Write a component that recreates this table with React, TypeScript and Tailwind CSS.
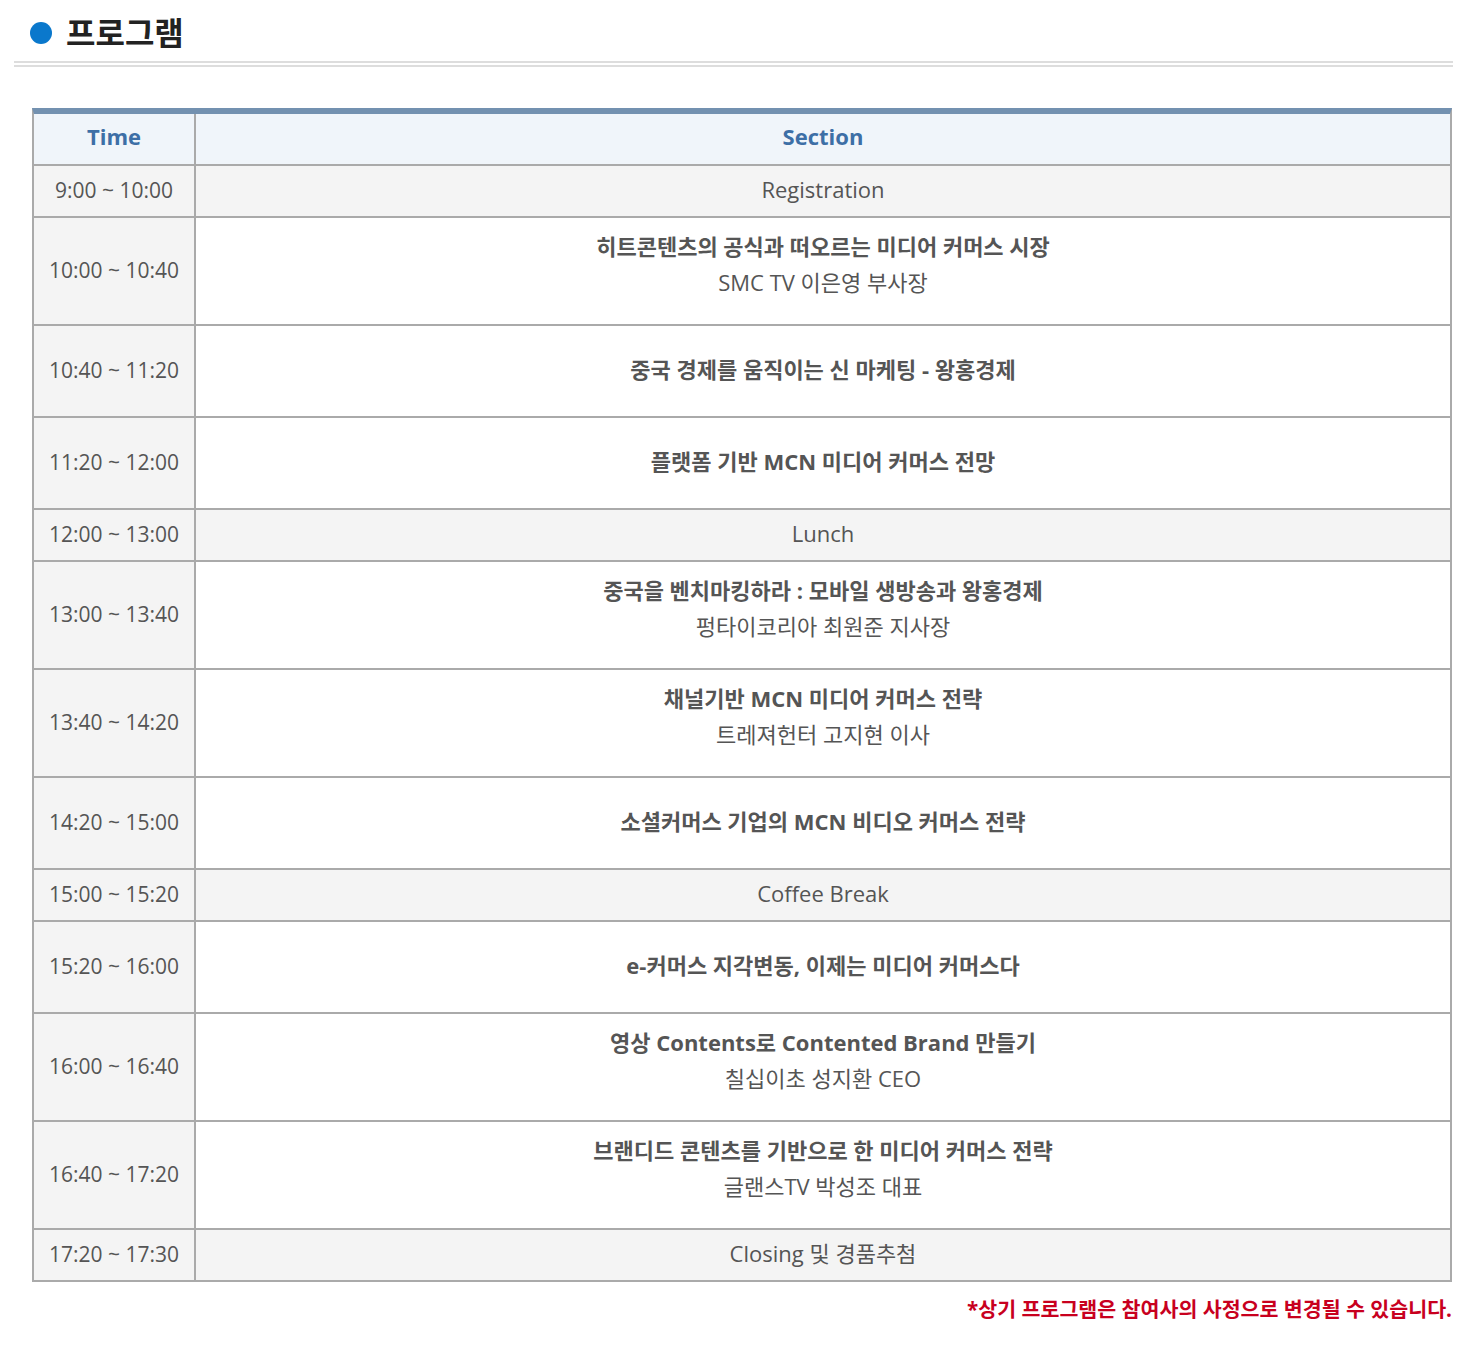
const font = "font-['Open_Sans','Noto_Sans_CJK_KR',sans-serif]";

type Row = {
  time: string;
  title: string;
  sub?: string;
  bold?: boolean;
  gray?: boolean;
};

const rows: Row[] = [
  { time: "9:00 ~ 10:00", title: "Registration", gray: true },
  { time: "10:00 ~ 10:40", title: "히트콘텐츠의 공식과 떠오르는 미디어 커머스 시장", sub: "SMC TV 이은영 부사장", bold: true },
  { time: "10:40 ~ 11:20", title: "중국 경제를 움직이는 신 마케팅 - 왕홍경제", bold: true },
  { time: "11:20 ~ 12:00", title: "플랫폼 기반 MCN 미디어 커머스 전망", bold: true },
  { time: "12:00 ~ 13:00", title: "Lunch", gray: true },
  { time: "13:00 ~ 13:40", title: "중국을 벤치마킹하라 : 모바일 생방송과 왕홍경제", sub: "펑타이코리아 최원준 지사장", bold: true },
  { time: "13:40 ~ 14:20", title: "채널기반 MCN 미디어 커머스 전략", sub: "트레져헌터 고지현 이사", bold: true },
  { time: "14:20 ~ 15:00", title: "소셜커머스 기업의 MCN 비디오 커머스 전략", bold: true },
  { time: "15:00 ~ 15:20", title: "Coffee Break", gray: true },
  { time: "15:20 ~ 16:00", title: "e-커머스 지각변동, 이제는 미디어 커머스다", bold: true },
  { time: "16:00 ~ 16:40", title: "영상 Contents로 Contented Brand 만들기", sub: "칠십이초 성지환 CEO", bold: true },
  { time: "16:40 ~ 17:20", title: "브랜디드 콘텐츠를 기반으로 한 미디어 커머스 전략", sub: "글랜스TV 박성조 대표", bold: true },
  { time: "17:20 ~ 17:30", title: "Closing 및 경품추첨", gray: true },
];

function ProgramRow({ row, last }: { row: Row; last: boolean }) {
  // heights include the 2px bottom border (border-box)
  let height = row.gray ? "h-[52px]" : row.sub ? "h-[108px]" : "h-[92px]";
  if (last) height = "h-[50px]";
  return (
    <div className={`flex ${height} ${last ? "" : "border-b-2 border-[#aaaaaa]"}`}>
      <div className="w-[162px] shrink-0 flex items-center justify-center bg-[#f4f4f4] border-r-2 border-[#aaaaaa] text-[21px] text-[#555555]">
        {row.time}
      </div>
      <div
        className={`flex-1 flex flex-col items-center justify-center gap-[8px] text-[#555555] ${
          row.gray ? "bg-[#f4f4f4]" : "bg-white"
        } ${row.sub ? "pb-[14px]" : "pb-[5px]"}`}
      >
        <div className={`text-[22px] leading-[28px] ${row.bold ? "font-bold" : ""}`}>{row.title}</div>
        {row.sub && <div className="text-[22px] leading-[28px]">{row.sub}</div>}
      </div>
    </div>
  );
}

export default function App() {
  return (
    <div className={`${font} bg-white w-[1480px] min-h-[1356px] pt-[12px]`}>
      <div className="pl-[30px] flex items-center gap-[14px] h-[42px]">
        <div className="w-[22px] h-[22px] rounded-full bg-[#0a78cc]" />
        <h2 className="text-[32px] font-bold text-[#222222] leading-none">프로그램</h2>
      </div>
      <div className="ml-[14px] w-[1439px] mt-[7px] border-t-2 border-b-2 border-[#dddddd] h-[6px]" />

      <div className="ml-[32px] w-[1420px] mt-[41px] border-t-[6px] border-t-[#7391b0] border-x-2 border-b-2 border-[#aaaaaa]">
        <div className="flex h-[52px] border-b-2 border-[#aaaaaa] bg-[#f0f5fa] text-[22px] font-bold text-[#3d6fa6]">
          <div className="w-[162px] shrink-0 flex items-center justify-center border-r-2 border-[#aaaaaa] pb-[5px]">Time</div>
          <div className="flex-1 flex items-center justify-center pb-[5px]">Section</div>
        </div>
        {rows.map((r, i) => (
          <ProgramRow key={r.time} row={r} last={i === rows.length - 1} />
        ))}
      </div>

      <p className="w-[1452px] text-right mt-[12px] text-[20.6px] font-bold text-[#c8001e]">
        *상기 프로그램은 참여사의 사정으로 변경될 수 있습니다.
      </p>
    </div>
  );
}
